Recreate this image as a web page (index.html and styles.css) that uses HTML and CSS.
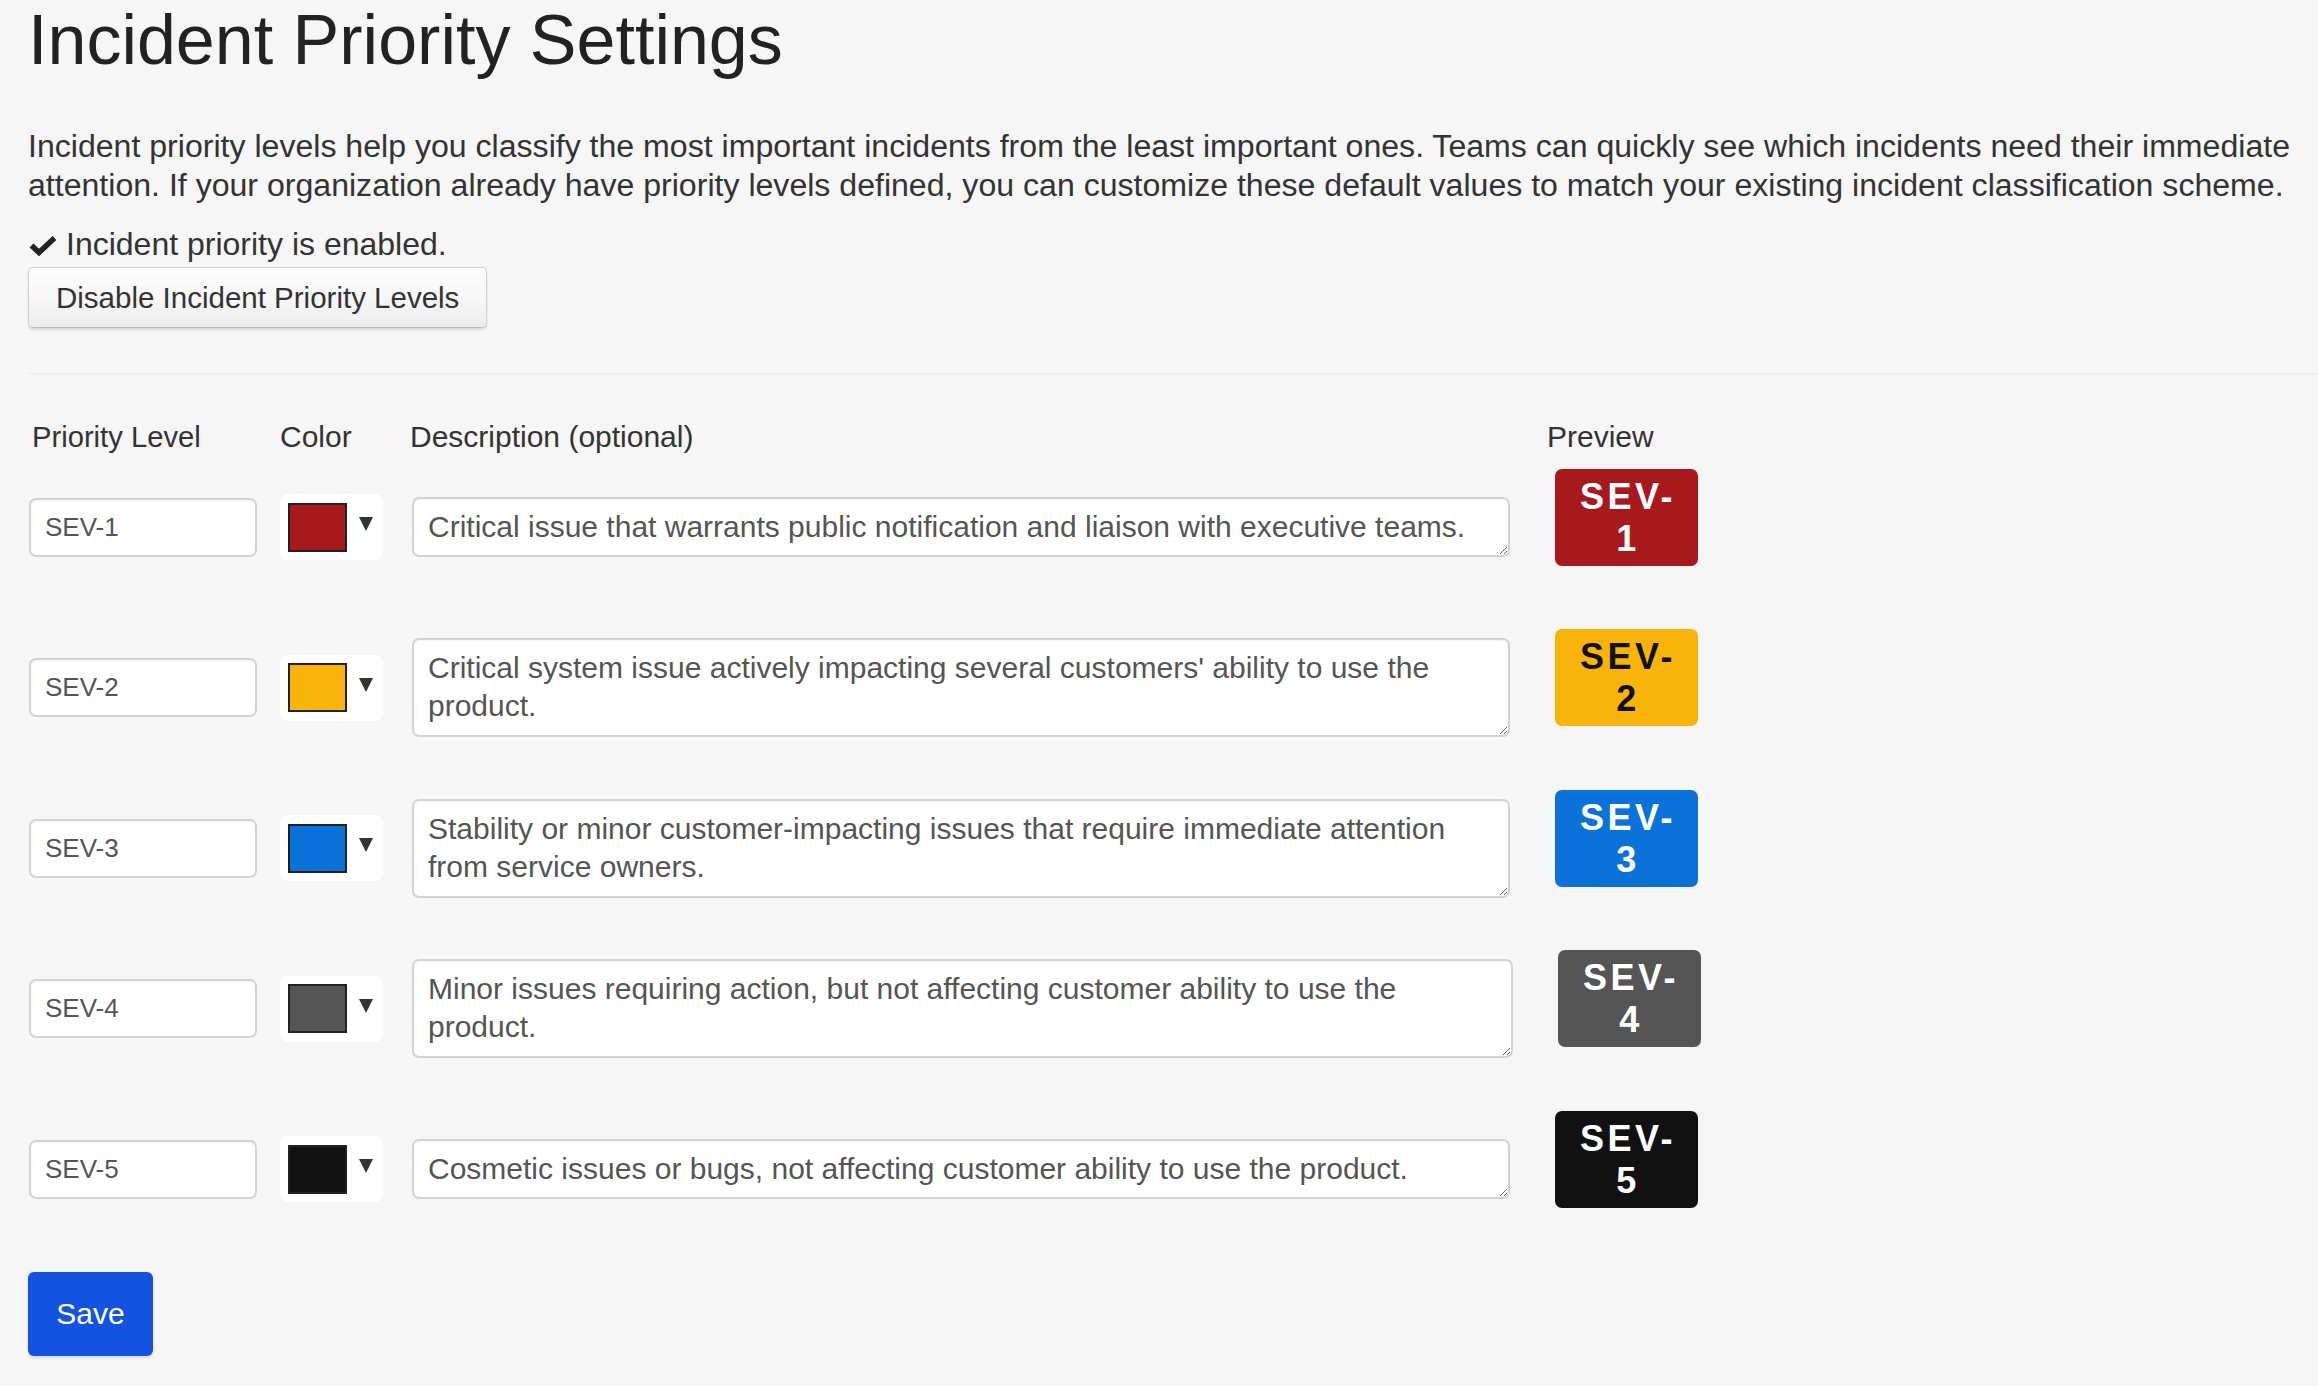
FILE: index.html
```html
<!DOCTYPE html>
<html lang="en">
<head>
<meta charset="utf-8">
<title>Incident Priority Settings</title>
<link rel="stylesheet" href="styles.css">
</head>
<body>
<main class="page">
  <h1 class="title">Incident Priority Settings</h1>
  <p class="intro">Incident priority levels help you classify the most important incidents from the least important ones. Teams can quickly see which incidents need their immediate attention. If your organization already have priority levels defined, you can customize these default values to match your existing incident classification scheme.</p>
  <div class="status"><svg class="check" viewBox="0 0 28 20" aria-hidden="true"><polyline points="2.5,9.5 10,16.5 25.5,2" fill="none" stroke="#222" stroke-width="5.5"/></svg>Incident priority is enabled.</div>
  <button class="btn-secondary" type="button">Disable Incident Priority Levels</button>
  <hr class="divider">

  <section class="levels">
    <div class="levels-head">
      <div class="col-level head-level">Priority Level</div>
      <div class="col-color">Color</div>
      <div class="col-desc head-desc">Description (optional)</div>
      <div class="col-preview">Preview</div>
    </div>

    <div class="level-list">
      <div class="level-row">
        <input class="level-input" type="text" value="SEV-1">
        <div class="color-picker"><span class="swatch sw-red"></span><span class="caret"></span></div>
        <textarea class="desc desc-1" rows="1">Critical issue that warrants public notification and liaison with executive teams.</textarea>
        <div class="preview"><div class="badge bg-red">SEV-1</div></div>
      </div>

      <div class="level-row">
        <input class="level-input" type="text" value="SEV-2">
        <div class="color-picker"><span class="swatch sw-yellow"></span><span class="caret"></span></div>
        <textarea class="desc desc-2" rows="2">Critical system issue actively impacting several customers' ability to use the product.</textarea>
        <div class="preview"><div class="badge bg-yellow">SEV-2</div></div>
      </div>

      <div class="level-row">
        <input class="level-input" type="text" value="SEV-3">
        <div class="color-picker"><span class="swatch sw-blue"></span><span class="caret"></span></div>
        <textarea class="desc desc-2" rows="2">Stability or minor customer-impacting issues that require immediate attention from service owners.</textarea>
        <div class="preview"><div class="badge bg-blue">SEV-3</div></div>
      </div>

      <div class="level-row">
        <input class="level-input" type="text" value="SEV-4">
        <div class="color-picker"><span class="swatch sw-gray"></span><span class="caret"></span></div>
        <textarea class="desc desc-2 desc-wide" rows="2">Minor issues requiring action, but not affecting customer ability to use the product.</textarea>
        <div class="preview"><div class="badge bg-gray">SEV-4</div></div>
      </div>

      <div class="level-row">
        <input class="level-input" type="text" value="SEV-5">
        <div class="color-picker"><span class="swatch sw-black"></span><span class="caret"></span></div>
        <textarea class="desc desc-1" rows="1">Cosmetic issues or bugs, not affecting customer ability to use the product.</textarea>
        <div class="preview"><div class="badge bg-black">SEV-5</div></div>
      </div>
    </div>
  </section>

  <button class="btn-primary" type="button">Save</button>
</main>
</body>
</html>
```

FILE: styles.css
```css
* { box-sizing: border-box; }

html, body {
  margin: 0;
  background: #f6f6f6;
}

body {
  font-family: "Liberation Sans", Arial, sans-serif;
  color: #333;
}

.page {
  padding: 0 6px 40px 28px;
}

.title {
  margin: 0;
  font-size: 70px;
  line-height: 80px;
  font-weight: 400;
  color: #222;
}

.intro {
  margin: 47px 0 0;
  font-size: 32.1px;
  line-height: 39px;
  color: #333;
}

.status {
  margin-top: 20px;
  font-size: 32px;
  line-height: 39px;
  color: #333;
  display: flex;
  align-items: center;
}

.check {
  width: 28px;
  height: 20px;
  margin: 2px 9px 0 1px;
  flex: none;
}

.btn-secondary {
  display: block;
  margin-top: 3px;
  height: 61px;
  padding: 0 27px;
  font-family: "Liberation Sans", Arial, sans-serif;
  font-size: 29.5px;
  color: #333;
  background: linear-gradient(#ffffff, #ededed);
  border: 1px solid #cfcfcf;
  border-bottom-color: #bdbdbd;
  border-radius: 5px;
  box-shadow: 0 2px 2px rgba(0, 0, 0, 0.12);
}

.divider {
  margin: 45px -6px 0 0;
  border: 0;
  border-top: 1px solid #ebebeb;
  height: 0;
}

.levels {
  margin-top: 45px;
}

.levels-head {
  display: flex;
  font-size: 30px;
  line-height: 36px;
  color: #333;
  margin-bottom: 12px;
}

.col-level { width: 252px; }
.col-color { width: 130px; }
.col-desc { width: 1137px; }
.head-level { padding-left: 4px; font-size: 29.2px; }

.level-list {
  display: flex;
  flex-direction: column;
  gap: 40.5px;
}

.level-row {
  display: flex;
  align-items: center;
  height: 120px;
}

.level-input {
  width: 228px;
  height: 59px;
  margin-left: 1px;
  padding: 0 14px;
  font-family: "Liberation Sans", Arial, sans-serif;
  font-size: 26px;
  color: #555;
  background: #fff;
  border: 2px solid #d3d3d3;
  border-radius: 7px;
  box-shadow: inset 0 1px 2px rgba(0, 0, 0, 0.05);
  outline: none;
}

.color-picker {
  margin-left: 23px;
  width: 103px;
  height: 66px;
  background: #fff;
  border-radius: 8px;
  display: flex;
  align-items: center;
  padding-left: 8px;
}

.swatch {
  width: 59px;
  height: 49px;
  border: 2px solid #222;
}

.sw-red { background: #a8191e; }
.sw-yellow { background: #f8b40a; }
.sw-blue { background: #0a72d9; }
.sw-gray { background: #555555; }
.sw-black { background: #111111; }

.caret {
  margin-left: 12px;
  margin-top: -6px;
  width: 0;
  height: 0;
  border-left: 7.5px solid transparent;
  border-right: 7.5px solid transparent;
  border-top: 14px solid #333;
}

.desc {
  margin-left: 29px;
  width: 1098px;
  padding: 9px 14px;
  font-family: "Liberation Sans", Arial, sans-serif;
  font-size: 30px;
  line-height: 38px;
  color: #555;
  background: #fff;
  border: 2px solid #d3d3d3;
  border-radius: 7px;
  box-shadow: inset 0 1px 2px rgba(0, 0, 0, 0.05);
  outline: none;
  resize: vertical;
  overflow: hidden;
}

.desc-1 { height: 60px; }
.desc-2 { height: 99px; }
.desc-wide { width: 1101px; }

.preview {
  margin-left: 37px;
  margin-bottom: 20px;
}

.badge {
  margin-left: 8px;
  width: 143px;
  height: 97px;
  padding: 7px 18px 0 21px;
  border-radius: 7px;
  font-family: "Liberation Sans", Arial, sans-serif;
  font-weight: 700;
  font-size: 36px;
  line-height: 42px;
  letter-spacing: 3.5px;
  text-align: center;
  color: #fff;
  word-break: break-all;
}

.bg-red { background: #a8191e; }
.bg-yellow { background: #f8b40a; color: #111; }
.bg-blue { background: #0a72d9; }
.bg-gray { background: #555555; }
.bg-black { background: #111111; }

.btn-primary {
  display: block;
  margin-top: 42.5px;
  width: 125px;
  height: 84px;
  font-family: "Liberation Sans", Arial, sans-serif;
  font-size: 30px;
  color: #fff;
  background: #1453e2;
  border: 0;
  border-radius: 6px;
  box-shadow: 0 2px 3px rgba(0, 0, 0, 0.12);
}
```
